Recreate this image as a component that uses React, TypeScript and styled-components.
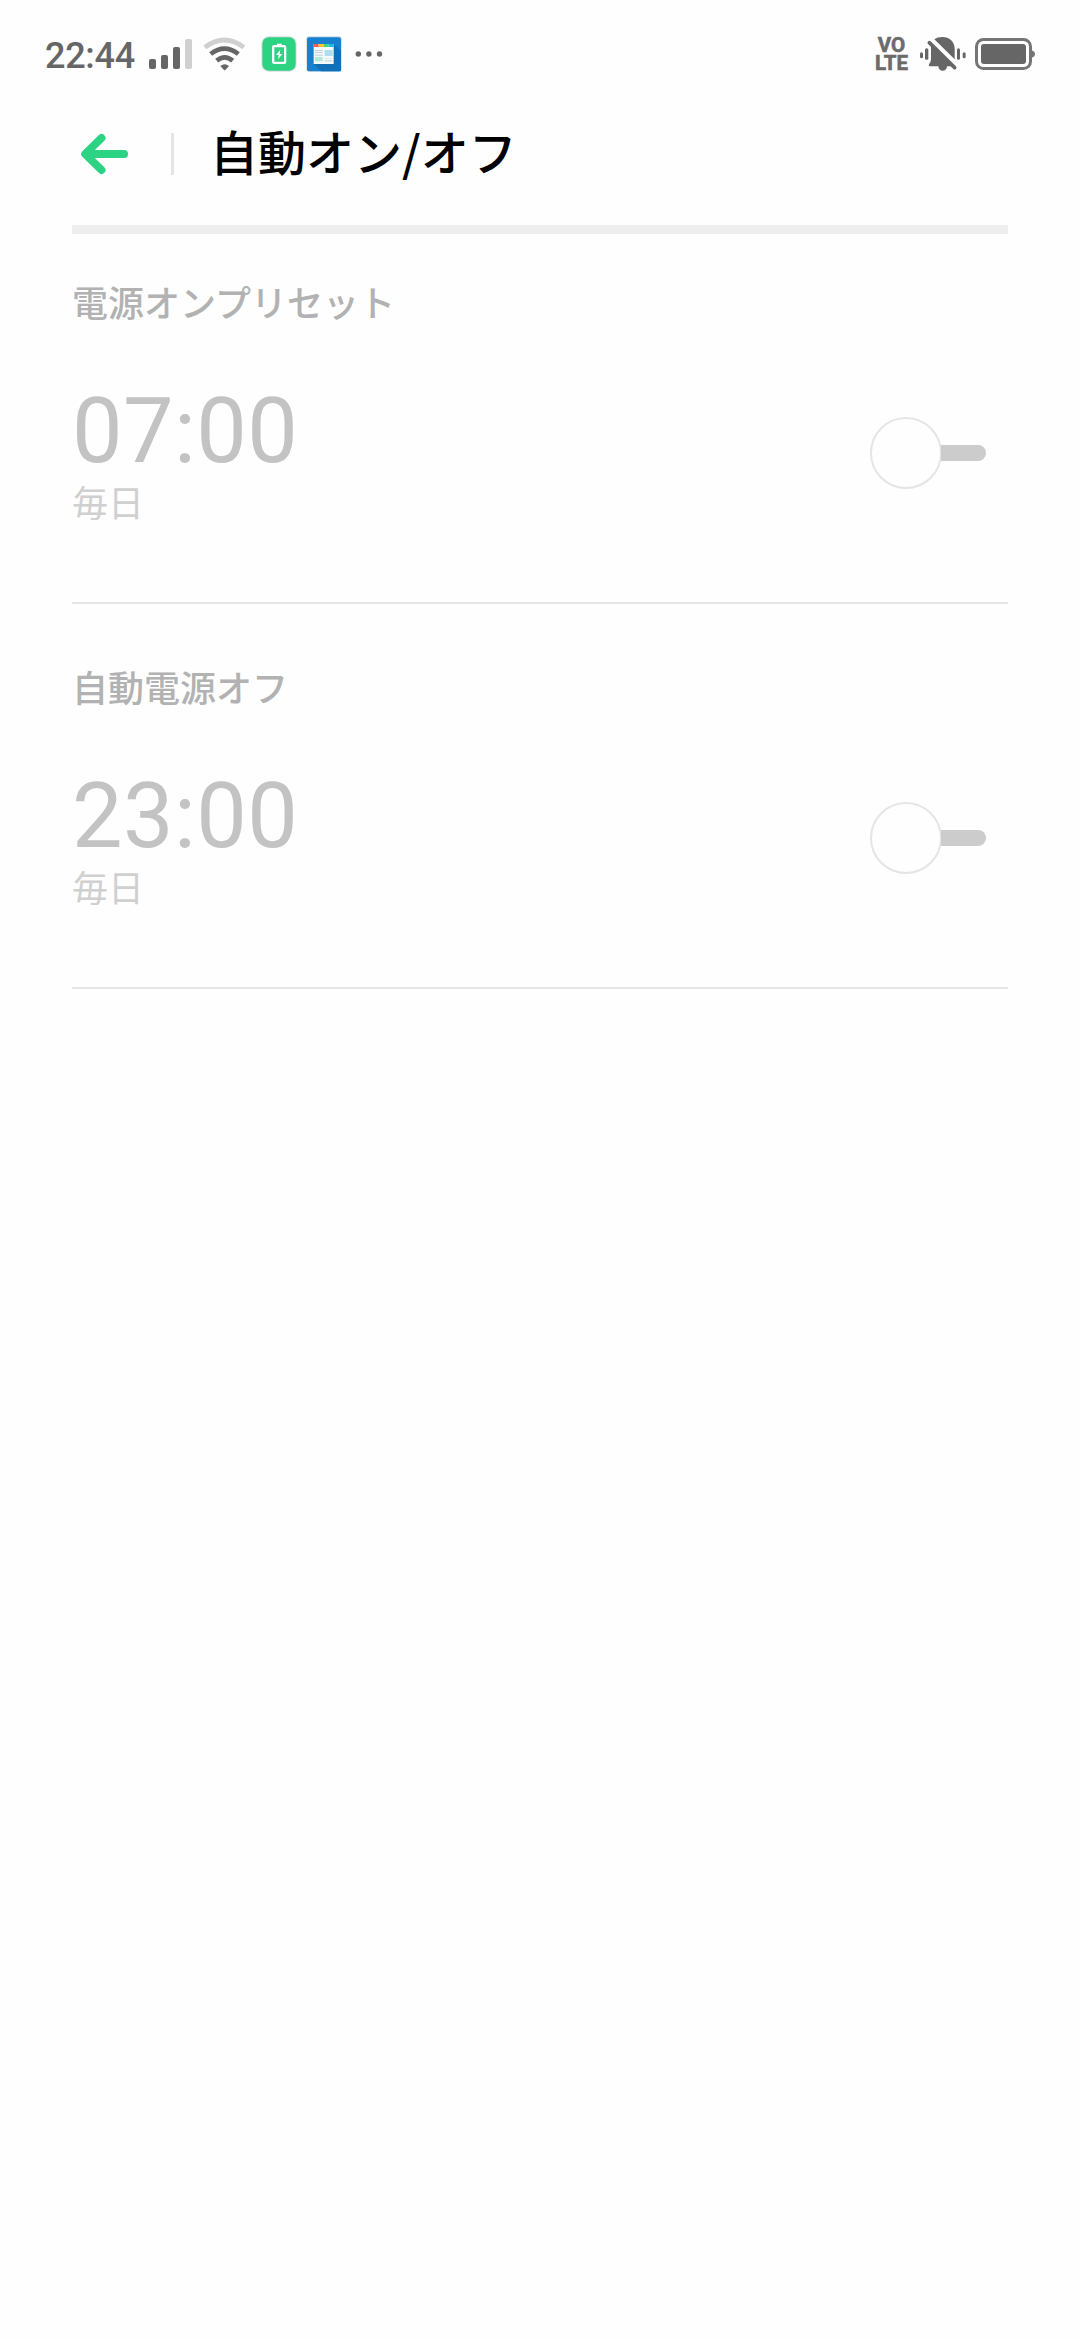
import React, { useState } from "react";
import styled, { createGlobalStyle } from "styled-components";

const GlobalStyle = createGlobalStyle`
  *, *::before, *::after { box-sizing: border-box; }
  html, body { margin: 0; padding: 0; background: #fefefe; }
  body { font-family: Roboto, "Noto Sans CJK JP", sans-serif; }
`;

const Screen = styled.div`
  width: 1080px;
  height: 2340px;
  overflow: hidden;
  background: #fefefe;
`;

const StatusBar = styled.header`
  display: flex;
  align-items: center;
  justify-content: space-between;
  height: 108px;
  padding: 0 45px;
`;

const StatusGroup = styled.div`
  display: flex;
  align-items: center;
`;

const Clock = styled.span`
  width: 90px;
  margin-right: 14px;
  font-size: 36px;
  font-weight: 500;
  line-height: 36px;
  letter-spacing: -0.3px;
  color: #666;
  padding-top: 3px;
`;

const Glyph = styled.svg<{ $gap?: number }>`
  display: block;
  flex: none;
  overflow: visible;
  margin-right: ${(p) => p.$gap ?? 0}px;
`;

const VolteText = styled.text`
  font-family: Roboto, sans-serif;
  font-weight: 700;
  font-size: 21px;
  fill: #6b6b6b;
  stroke: #6b6b6b;
  stroke-width: 0.6px;
`;

const TitleBar = styled.div`
  display: flex;
  align-items: center;
  height: 92px;
  padding-left: 81px;
`;

const BackButton = styled.button`
  display: flex;
  width: 48px;
  height: 42px;
  padding: 0;
  border: 0;
  background: none;
`;

const TitleDivider = styled.span`
  width: 3px;
  height: 42px;
  margin: 0 36px 0 42px;
  background: #e5e5e5;
`;

const Title = styled.h1`
  margin: 0;
  padding-bottom: 8px;
  font-family: "Noto Sans CJK JP", sans-serif;
  font-size: 48px;
  font-weight: 500;
  line-height: 72px;
  color: #000;
`;

const Content = styled.main`
  margin: 25px 72px 0;
  border-top: 9px solid #eee;
`;

const Section = styled.section<{ $first?: boolean }>`
  height: ${(p) => (p.$first ? 370 : 385)}px;
  padding-top: ${(p) => (p.$first ? 40 : 55)}px;
  border-bottom: 2px solid #e5e5e5;
`;

const SectionTitle = styled.h2`
  margin: 0;
  font-family: "Noto Sans CJK JP", sans-serif;
  font-size: 36px;
  font-weight: 500;
  line-height: 54px;
  color: #b2b2b2;
`;

const Row = styled.div`
  display: flex;
  align-items: center;
  justify-content: space-between;
  height: 144px;
  margin-top: 53px;
  padding-right: 22px;
`;

const Schedule = styled.div`
  display: flex;
  flex-direction: column;
  padding-top: 5px;
`;

const Time = styled.span`
  font-size: 90px;
  line-height: 90px;
  letter-spacing: 0.4px;
  color: #c3c3c3;
`;

const Repeat = styled.span`
  font-family: "Noto Sans CJK JP", sans-serif;
  font-size: 36px;
  font-weight: 400;
  line-height: 48px;
  color: #d0d0d0;
`;

const Switch = styled.button<{ $on: boolean }>`
  display: flex;
  align-items: center;
  flex-direction: ${(p) => (p.$on ? "row-reverse" : "row")};
  width: 116px;
  height: 72px;
  padding: 0;
  border: 0;
  background: none;
`;

const Knob = styled.span`
  flex: none;
  width: 72px;
  height: 72px;
  border: 2px solid #e5e5e5;
  border-radius: 50%;
`;

const Track = styled.span<{ $on: boolean }>`
  flex: 1;
  height: 16px;
  margin-left: -1px;
  border-radius: ${(p) => (p.$on ? "8px 0 0 8px" : "0 8px 8px 0")};
  background: ${(p) => (p.$on ? "#2bd383" : "#ccc")};
`;

const SignalIcon = () => (
  <Glyph width="43" height="34" viewBox="0 0 43 34" $gap={11} fill="#666">
    <rect x="0" y="22" width="7" height="10" rx="2" />
    <rect x="12" y="18" width="7" height="14" rx="2" />
    <rect x="24" y="10" width="7" height="22" rx="2" />
    <rect x="36" y="2" width="7" height="30" rx="2" fill="#d0d0d0" />
  </Glyph>
);

const WifiIcon = () => (
  <Glyph width="43" height="34" viewBox="0 0 129 102" $gap={15} fill="none" strokeWidth="14">
    <path d="M5.500 31 Q64 -13 122.500 31" stroke="#d0d0d0" />
    <path d="M23 51 Q64.500 19 106 51" stroke="#666" />
    <path d="M41 71 Q65 51 89 71" stroke="#666" />
    <path d="M52 87 Q65 77 78 87 L67 99 Q65 101 63 99 Z" fill="#666" />
  </Glyph>
);

const BatterySaverIcon = () => (
  <Glyph width="36" height="36" viewBox="0 0 108 108" $gap={9}>
    <rect x="1" y="1" width="106" height="106" rx="22" fill="#dedede" />
    <rect x="4" y="4" width="100" height="100" rx="20" fill="#2bd383" />
    <path d="M48 23 H62 V29 H48 Z" fill="#fff" />
    <rect x="36.500" y="30.500" width="36" height="50" rx="3" fill="none" stroke="#fff" strokeWidth="7" />
    <path d="M58 41 L45 57 H53 L51 70 L64 54 H56 Z" fill="#fff" />
  </Glyph>
);

const NewsIcon = () => (
  <Glyph width="36" height="36" viewBox="0 0 108 108" $gap={13}>
    <rect x="1" y="1" width="106" height="106" rx="7" fill="#cfdbe5" />
    <rect x="3" y="4" width="102" height="102" rx="6" fill="#1780cf" />
    <path d="M83 24 L105 46 V104 L103 106 H45 L23 83 Z" fill="#136fb6" />
    <rect x="23" y="24" width="60" height="60" fill="#f5f9fa" />
    <rect x="23" y="24" width="15" height="9" fill="#ff5656" />
    <rect x="38" y="24" width="15" height="9" fill="#ffc62c" />
    <rect x="53" y="24" width="15" height="9" fill="#43d962" />
    <rect x="68" y="24" width="15" height="9" fill="#16baf0" />
    <g fill="#c4ced9">
      <rect x="27" y="42" width="23" height="3" />
      <rect x="27" y="48" width="23" height="3" />
      <rect x="27" y="56" width="23" height="3" />
      <rect x="56" y="73" width="23" height="3" />
    </g>
    <rect x="56" y="66" width="23" height="3" fill="#e2eaee" />
    <rect x="56" y="42" width="24" height="18" fill="#addfef" />
    <rect x="27" y="63" width="23" height="13" fill="#b5ead0" />
  </Glyph>
);

const MoreIcon = () => (
  <Glyph width="28" height="8" viewBox="0 0 28 8" fill="#666">
    <circle cx="3.300" cy="4" r="2.700" />
    <circle cx="13.900" cy="4" r="2.700" />
    <circle cx="24.500" cy="4" r="2.700" />
  </Glyph>
);

const VolteIcon = () => (
  <Glyph width="34" height="36" viewBox="0 0 34 36" $gap={11}>
    <VolteText x="2.800" y="16" textLength="27.500" lengthAdjust="spacingAndGlyphs">VO</VolteText>
    <VolteText x="0" y="34" textLength="33" lengthAdjust="spacingAndGlyphs">LTE</VolteText>
  </Glyph>
);

const MutedIcon = () => (
  <Glyph width="46" height="36" viewBox="0 0 138 108" $gap={9} fill="#666">
    <rect x="0" y="49" width="9" height="18" rx="4.500" />
    <rect x="15" y="37" width="10" height="34" rx="4.500" />
    <rect x="111" y="37" width="9" height="34" rx="4.500" />
    <rect x="128" y="49" width="9" height="18" rx="4.500" />
    <path d="M43 10 Q52 3 67 3 C88 3 104 17 104 38 V70 Z" />
    <path d="M33 26 L100 91 H81 A13 13 0 0 1 55 91 H29 Q25 91 27 85 Q33 78 33 70 Z" />
    <path d="M28 20 L104 95" stroke="#666" strokeWidth="11" strokeLinecap="round" />
  </Glyph>
);

const BatteryIcon = () => (
  <Glyph width="60" height="34" viewBox="0 0 60 34">
    <rect x="1.500" y="2.500" width="54" height="29" rx="7" fill="none" stroke="#757575" strokeWidth="3" />
    <rect x="6" y="7" width="45" height="20" rx="3" fill="#666" />
    <path d="M57 13.500 Q60 14.500 60 17 Q60 19.500 57 20.500 Z" fill="#757575" />
  </Glyph>
);

const BackIcon = () => (
  <Glyph
    width="48"
    height="42"
    viewBox="0 0 48 42"
    fill="none"
    stroke="#2bd383"
    strokeWidth="8"
    strokeLinejoin="round"
    strokeLinecap="round"
  >
    <path d="M20.500 5 L4.200 21 L20.500 37" />
    <path d="M6 21 H43" />
  </Glyph>
);

interface PowerSchedule {
  title: string;
  time: string;
  repeat: string;
}

const schedules: PowerSchedule[] = [
  { title: "電源オンプリセット", time: "07:00", repeat: "毎日" },
  { title: "自動電源オフ", time: "23:00", repeat: "毎日" },
];

const ScheduleSection = ({ item, first }: { item: PowerSchedule; first: boolean }) => {
  const [on, setOn] = useState(false);
  return (
    <Section $first={first}>
      <SectionTitle>{item.title}</SectionTitle>
      <Row>
        <Schedule>
          <Time>{item.time}</Time>
          <Repeat>{item.repeat}</Repeat>
        </Schedule>
        <Switch $on={on} role="switch" aria-checked={on} onClick={() => setOn(!on)}>
          <Knob />
          <Track $on={on} />
        </Switch>
      </Row>
    </Section>
  );
};

export default function App() {
  return (
    <Screen lang="ja">
      <GlobalStyle />
      <StatusBar>
        <StatusGroup>
          <Clock>22:44</Clock>
          <SignalIcon />
          <WifiIcon />
          <BatterySaverIcon />
          <NewsIcon />
          <MoreIcon />
        </StatusGroup>
        <StatusGroup>
          <VolteIcon />
          <MutedIcon />
          <BatteryIcon />
        </StatusGroup>
      </StatusBar>
      <TitleBar>
        <BackButton>
          <BackIcon />
        </BackButton>
        <TitleDivider />
        <Title>自動オン/オフ</Title>
      </TitleBar>
      <Content>
        {schedules.map((item, i) => (
          <ScheduleSection key={item.title} item={item} first={i === 0} />
        ))}
      </Content>
    </Screen>
  );
}
